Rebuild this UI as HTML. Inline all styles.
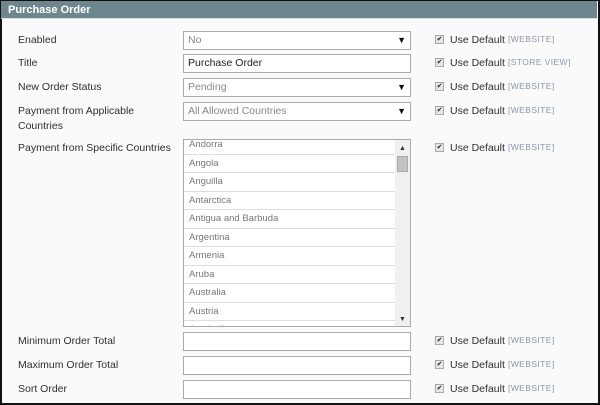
<!DOCTYPE html>
<html><head><style>
*{margin:0;padding:0;box-sizing:border-box}
body{width:600px;height:405px;background:#fff;font-family:"Liberation Sans",Arial,sans-serif;font-size:11px;color:#2f2f2f;position:relative;overflow:hidden}
.frame{position:absolute;left:0;top:0;width:600px;height:405px;border:2px solid #111;border-top-width:1px;background:#fafafa}
.hdr{position:absolute;left:1px;top:1px;width:596px;height:18px;background:#6e878f;color:#fff;font-weight:bold;font-size:11px;line-height:18px;padding-left:7px;border-bottom:1px solid #d6dfe2}
.l{position:absolute;left:18px;font-size:10.5px;line-height:15px}
.in{position:absolute;left:183px;width:228px;height:19px;border:1px solid #aaa;background:#fff;font-size:10.5px;line-height:17px;padding-left:4px;color:#888}
.in.t{color:#222}
.in .a{position:absolute;right:4px;top:0;font-size:9px;color:#111}
.cb{position:absolute;left:435px;width:9px;height:9px;border:1px solid #aaa;background:#e8e8e8;font-size:7px;line-height:7px;text-align:center;color:#222}
.ud{position:absolute;left:450px;font-size:10.5px;line-height:12px}
.sc{position:absolute;left:508px;font-size:8.5px;color:#8a97a8;letter-spacing:.4px;line-height:12px}
.ms{position:absolute;left:183px;top:139px;width:228px;height:188px;border:1px solid #aaa;background:#fff;overflow:hidden}
.ms .r{height:18.5px;border-bottom:1px solid #ddd;width:212px;padding-left:5px;font-size:9.5px;line-height:18px;color:#777}
.sb{position:absolute;right:0;top:0;width:15px;height:186px;background:#f0f0f0}
.th{position:absolute;left:2px;top:16px;width:11px;height:16px;background:#c2c2c2;border:1px solid #aaa}
</style></head><body>
<div class="frame"></div>
<div class="hdr">Purchase Order</div>

<div class="l" style="top:33px">Enabled</div>
<div class="l" style="top:56px">Title</div>
<div class="l" style="top:80px">New Order Status</div>
<div class="l" style="top:104px">Payment from Applicable<br>Countries</div>
<div class="l" style="top:141px">Payment from Specific Countries</div>
<div class="l" style="top:334px">Minimum Order Total</div>
<div class="l" style="top:358px">Maximum Order Total</div>
<div class="l" style="top:382px">Sort Order</div>

<div class="in" style="top:31px">No<span class="a">▼</span></div>
<div class="in t" style="top:54px">Purchase Order</div>
<div class="in" style="top:78px">Pending<span class="a">▼</span></div>
<div class="in" style="top:102px">All Allowed Countries<span class="a">▼</span></div>

<div class="ms">
<div style="margin-top:-4px">
<div class="r">Andorra</div><div class="r">Angola</div><div class="r">Anguilla</div><div class="r">Antarctica</div><div class="r">Antigua and Barbuda</div><div class="r">Argentina</div><div class="r">Armenia</div><div class="r">Aruba</div><div class="r">Australia</div><div class="r">Austria</div><div class="r">Azerbaijan</div>
</div>
<div class="sb"><div style="font-size:7px;text-align:center;line-height:10px;margin-top:4px">▲</div><div class="th"></div><div style="position:absolute;bottom:3px;width:15px;font-size:7px;text-align:center">▼</div></div>
</div>

<div class="in" style="top:332px"></div>
<div class="in" style="top:356px"></div>
<div class="in" style="top:380px"></div>

<div class="cb" style="top:35px">✔</div><div class="ud" style="top:34px">Use Default</div><div class="sc" style="top:33px">[WEBSITE]</div>
<div class="cb" style="top:58px">✔</div><div class="ud" style="top:57px">Use Default</div><div class="sc" style="top:56px">[STORE VIEW]</div>
<div class="cb" style="top:82px">✔</div><div class="ud" style="top:81px">Use Default</div><div class="sc" style="top:80px">[WEBSITE]</div>
<div class="cb" style="top:106px">✔</div><div class="ud" style="top:105px">Use Default</div><div class="sc" style="top:104px">[WEBSITE]</div>
<div class="cb" style="top:143px">✔</div><div class="ud" style="top:142px">Use Default</div><div class="sc" style="top:141px">[WEBSITE]</div>
<div class="cb" style="top:336px">✔</div><div class="ud" style="top:335px">Use Default</div><div class="sc" style="top:334px">[WEBSITE]</div>
<div class="cb" style="top:360px">✔</div><div class="ud" style="top:359px">Use Default</div><div class="sc" style="top:358px">[WEBSITE]</div>
<div class="cb" style="top:384px">✔</div><div class="ud" style="top:383px">Use Default</div><div class="sc" style="top:382px">[WEBSITE]</div>
</body></html>
